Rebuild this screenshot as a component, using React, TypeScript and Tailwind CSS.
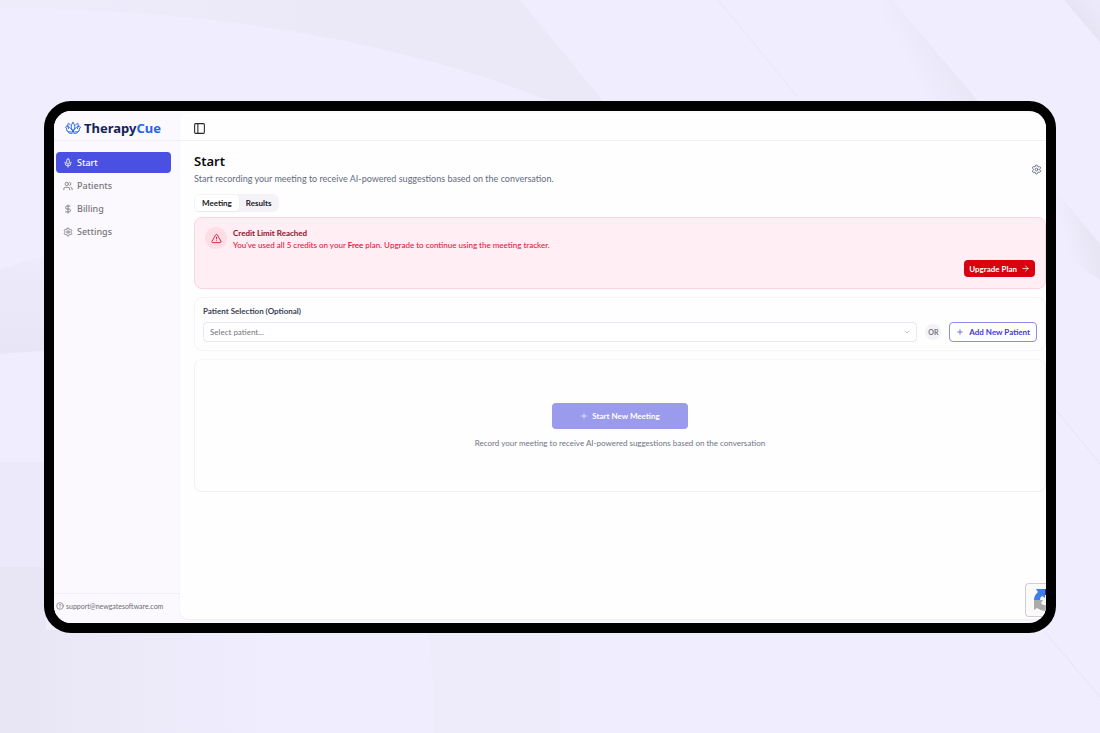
import React from "react";
import {
  ArrowRight,
  ChevronDown,
  CircleHelp,
  DollarSign,
  Mic,
  PanelLeft,
  Plus,
  Settings,
  TriangleAlert,
  Users,
} from "lucide-react";

const navItems = [
  { label: "Start", icon: Mic, active: true },
  { label: "Patients", icon: Users, active: false },
  { label: "Billing", icon: DollarSign, active: false },
  { label: "Settings", icon: Settings, active: false },
];

function Backdrop() {
  return (
    <svg
      className="absolute inset-0 h-full w-full"
      viewBox="0 0 1100 733"
      preserveAspectRatio="none"
      aria-hidden="true"
    >
      <defs>
        <linearGradient id="topFade" x1="0" x2="1" y1="0" y2="0">
          <stop offset="0" stopColor="#eeebfa" />
          <stop offset="0.6" stopColor="#ebe9f7" />
          <stop offset="1" stopColor="#ebe9f8" />
        </linearGradient>
        <linearGradient id="leftFade" x1="0" x2="0" y1="0" y2="1">
          <stop offset="0" stopColor="#edebfb" />
          <stop offset="1" stopColor="#e8e6f6" />
        </linearGradient>
        <linearGradient id="bottomFade" x1="0" x2="1" y1="0" y2="0">
          <stop offset="0" stopColor="#e7e5f4" />
          <stop offset="0.35" stopColor="#ebe9f8" />
          <stop offset="1" stopColor="#f0edfe" />
        </linearGradient>
        <linearGradient id="bandFade" x1="0.8" y1="0.55" x2="0.35" y2="0.8">
          <stop offset="0" stopColor="#e8e6f5" />
          <stop offset="1" stopColor="#f0edfe" />
        </linearGradient>
        <linearGradient id="cornerFade" x1="0.3" y1="0.7" x2="1" y2="0">
          <stop offset="0" stopColor="#e4e2f1" />
          <stop offset="1" stopColor="#edebfb" />
        </linearGradient>
      </defs>
      <rect width="1100" height="733" fill="#f0edfe" />
      <path d="M0 0H520L604 102H552C400 40 200 8 0 8Z" fill="url(#topFade)" />
      <path d="M718 0L797 96" stroke="#e8e5f5" fill="none" />
      <path d="M892 0L978 101H910L880 0Z" fill="url(#bandFade)" />
      <path d="M1064 0H1100V42Z" fill="url(#cornerFade)" />
      <path d="M1056 191L1100 244V280L1056 250Z" fill="url(#bandFade)" />
      <path d="M0 270Q22 262 46 256V351Q20 352 0 354Z" fill="url(#leftFade)" />
      <path d="M0 462H46V567H0Z" fill="#ece9fa" />
      <path d="M0 567H46V630H280V733H0Z" fill="url(#bottomFade)" />
      <path d="M428 630Q434 670 434 733H560V630Z" fill="#eeebfb" />
      <path d="M1056 410L1100 464M1045 632L1100 697" stroke="#e6e3f4" fill="none" />
    </svg>
  );
}

function Lotus() {
  return (
    <svg
      className="h-4 w-4 shrink-0 text-[#2563eb]"
      viewBox="0 0 32 28"
      fill="none"
      stroke="currentColor"
      strokeWidth="2"
      strokeLinejoin="round"
      strokeLinecap="round"
      aria-hidden="true"
    >
      <path d="M16 3C12 7 11 14 16 21C21 14 20 7 16 3Z" />
      <path d="M11 8C9 6 8 5 6 5C5 9 6 12 7 15M21 8C23 6 24 5 26 5C27 9 26 12 25 15" />
      <path d="M5 10C3 10 2 11 1 12C4 15 3 18 4 20C8 22 13 23 16 21C19 23 24 22 28 20C29 18 28 15 31 12C30 11 29 10 27 10" />
      <path d="M6 11C10 13 14 16 16 21C18 16 22 13 26 11" />
      <path d="M6 22C9 26 13 26 16 23C19 26 23 26 26 22" />
    </svg>
  );
}

function Sidebar() {
  return (
    <aside className="flex w-[126px] shrink-0 flex-col bg-[#fbf9fd]">
      <div className="flex h-[30px] items-center gap-[3px] border-b border-[#f1eff4] pt-1 pl-[11px]">
        <Lotus />
        <span className="font-['Noto_Sans',sans-serif] text-[13px] leading-4 font-bold text-[#14235a]">
          Therapy<span className="text-[#2563eb]">Cue</span>
        </span>
      </div>
      <nav
        aria-label="Main"
        className="flex flex-1 flex-col gap-[2px] pt-[11px] pr-[9px] pl-[2px] font-['Noto_Sans',sans-serif]"
      >
        {navItems.map(({ label, icon: Icon, active }) => (
          <a
            key={label}
            href="#"
            aria-current={active ? "page" : undefined}
            className={
              active
                ? "flex h-[21px] items-center gap-1 rounded bg-[#4a51e2] px-[7px] text-[9px] font-medium text-white"
                : "flex h-[21px] items-center gap-1 rounded px-[7px] text-[9px] font-medium text-[#77757c]"
            }
          >
            <Icon size={10} strokeWidth={2} aria-hidden="true" />
            {label}
          </a>
        ))}
      </nav>
      <a
        href="mailto:support@newgatesoftware.com"
        className="flex h-[30px] items-start gap-[2px] border-t border-[#f1eff4] pt-[7px] pl-[2px] text-[7px] leading-[10px] text-[#6d6b72]"
      >
        <CircleHelp size={8} className="mt-px shrink-0" aria-hidden="true" />
        support@newgatesoftware.com
      </a>
    </aside>
  );
}

function CreditAlert() {
  return (
    <section className="flex h-[72px] flex-col justify-between rounded-lg border border-[#fdd3dd] bg-[#ffeff4] px-[10px] pt-[9px] pb-[11px]">
      <div className="flex gap-[6px]">
        <span className="flex h-[22px] w-[22px] items-center justify-center rounded-full bg-[#fedde4] text-[#dc1b3c]">
          <TriangleAlert size={11} aria-hidden="true" />
        </span>
        <div className="text-[8px]">
          <h2 className="leading-3 font-bold text-[#9b0a2c]">Credit Limit Reached</h2>
          <p className="leading-[13px] font-medium text-[#e01840]">
            You've used all 5 credits on your <strong className="font-bold">Free</strong> plan.
            Upgrade to continue using the meeting tracker.
          </p>
        </div>
      </div>
      <button
        type="button"
        className="flex h-[17px] items-center gap-1 self-end rounded bg-[#d9000f] px-[5px] text-[8px] font-bold text-white"
      >
        Upgrade Plan
        <ArrowRight size={9} aria-hidden="true" />
      </button>
    </section>
  );
}

function PatientSelection() {
  return (
    <section className="flex h-[54px] flex-col rounded-lg border border-[#f5f3fa] px-2 pt-[7px]">
      <label htmlFor="patient" className="text-[8px] leading-3 font-bold text-[#3b3f58]">
        Patient Selection (Optional)
      </label>
      <div className="mt-[5px] flex items-center gap-2">
        <div className="relative flex-1">
          <select
            id="patient"
            defaultValue=""
            className="block h-5 w-full appearance-none rounded border border-[#e8e6f0] bg-white pl-[6px] text-[8px] text-[#77757c]"
          >
            <option value="">Select patient...</option>
          </select>
          <ChevronDown
            size={8}
            className="pointer-events-none absolute top-[6px] right-[6px] text-[#aaa8b0]"
            aria-hidden="true"
          />
        </div>
        <span className="flex h-4 w-4 items-center justify-center rounded-full bg-[#f3f2f8] text-[7px] font-bold text-[#77757c]">
          OR
        </span>
        <button
          type="button"
          className="flex h-5 items-center gap-[5px] rounded border border-[#8d8df0] px-[6px] text-[8px] font-bold text-[#4338dc]"
        >
          <Plus size={8} aria-hidden="true" />
          Add New Patient
        </button>
      </div>
    </section>
  );
}

function MeetingPanel() {
  return (
    <section className="flex h-[133px] flex-col items-center rounded-lg border border-[#f1f0f6] border-t-[#f8f7fb] pt-[43px]">
      <button
        type="button"
        disabled
        className="flex h-[26px] w-[136px] items-center justify-center gap-1 rounded bg-[#9a9bed] text-[8px] font-bold text-white"
      >
        <Plus size={8} aria-hidden="true" />
        Start New Meeting
      </button>
      <p className="mt-2 text-[8px] leading-3 text-[#6f7385]">
        Record your meeting to receive AI-powered suggestions based on the conversation
      </p>
    </section>
  );
}

function CaptchaBadge() {
  return (
    <div className="absolute right-0 bottom-[6px] flex h-[34px] w-[21px] items-center overflow-hidden rounded-l-sm border border-r-0 border-[#d0ced4] bg-[#fafafa] pl-[7px]">
      <svg className="h-6 w-6 shrink-0" viewBox="0 0 24 24" aria-hidden="true">
        <path d="M1 12A11 11 0 0 1 5 4L3 1H12V10L9 8Q7 9 7 12Z" fill="#3f7de8" />
        <path d="M12 1A11 11 0 0 1 21 5L23 3V12H14L17 9Q15 7 12 7Z" fill="#1c3aa9" />
        <path d="M1 12H10L8 15Q11 19 15 16L20 20Q12 26 4 20L1 22Z" fill="#ababab" />
      </svg>
    </div>
  );
}

export default function App() {
  return (
    <div className="relative flex min-h-screen flex-col px-11 pt-[101px] pb-[100px] font-['Lato','Noto_Sans',sans-serif]">
      <Backdrop />
      <div className="relative flex flex-1 overflow-hidden rounded-[27px] border-10 border-black bg-[#fbf9fd]">
        <Sidebar />
        <div className="flex min-w-0 flex-1 flex-col pt-[2px] pb-1">
          <div className="flex flex-1 flex-col rounded-l-lg bg-[#fefefe] shadow-xs">
            <header className="flex h-7 items-center border-b border-[#f1eff4] px-[13px] pt-[3px]">
              <button type="button" aria-label="Toggle sidebar" className="text-[#27272a]">
                <PanelLeft size={13} aria-hidden="true" />
              </button>
            </header>
            <main className="flex flex-col pt-[11px] pl-[14px]">
              <div className="flex items-center justify-between pr-1">
                <div>
                  <h1 className="font-['Noto_Sans',sans-serif] text-[13px] leading-[18px] font-semibold text-[#0b0b10]">
                    Start
                  </h1>
                  <p className="mt-[2px] text-[9px] leading-[14px] text-[#646a7f]">
                    Start recording your meeting to receive AI-powered suggestions based on the
                    conversation.
                  </p>
                </div>
                <button type="button" aria-label="Meeting settings" className="text-[#646a7f]">
                  <Settings size={11} aria-hidden="true" />
                </button>
              </div>
              <div
                role="tablist"
                className="mt-2 flex h-[18px] self-start rounded-md bg-[#f5f3f8] p-px text-[8px] font-bold text-[#18181b]"
              >
                <button
                  type="button"
                  role="tab"
                  aria-selected="true"
                  className="rounded bg-white px-[7px] shadow-xs"
                >
                  Meeting
                </button>
                <button type="button" role="tab" aria-selected="false" className="px-[7px]">
                  Results
                </button>
              </div>
              <div className="mt-[5px] flex flex-col gap-2">
                <CreditAlert />
                <PatientSelection />
                <MeetingPanel />
              </div>
            </main>
          </div>
        </div>
        <CaptchaBadge />
      </div>
    </div>
  );
}
